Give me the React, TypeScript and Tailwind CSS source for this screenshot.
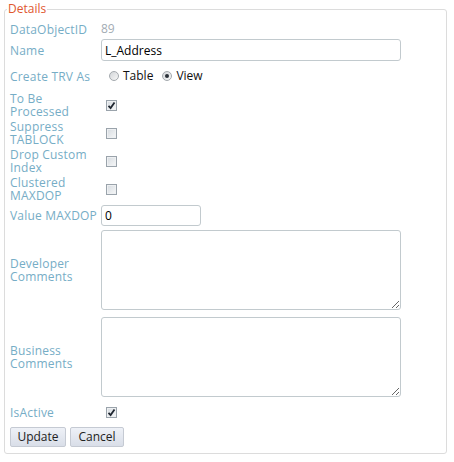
import React from "react";

const font = { fontFamily: '"Open Sans", "DejaVu Sans", sans-serif' };

const Check = ({ checked }: { checked?: boolean }) => (
    <span className="ml-[5px] flex h-[11px] w-[11px] items-center justify-center border border-[#9aa3ab] bg-gradient-to-br from-[#d6dbe0] to-[#f6f7f8] shadow-[inset_0_0_0_1px_#eef0f2]">
        {checked && (
            <svg width="9" height="9" viewBox="0 0 9 9">
                <path d="M1.5 4.8 L3.6 7 L7.5 1.5" fill="none" stroke="#1f2630" strokeWidth="1.8" />
            </svg>
        )}
    </span>
);

const Radio = ({ checked }: { checked?: boolean }) => (
    <span className="flex h-[10px] w-[10px] items-center justify-center rounded-full border border-[#a4a9ae] bg-gradient-to-br from-[#d3d6d9] to-[#f7f7f7]">
        {checked && <span className="h-[4px] w-[4px] rounded-full bg-[#2a3038]" />}
    </span>
);

const Row = ({ label, h, children }: any) => (
    <div className="flex items-center" style={{ height: h }}>
        <div className="w-[91px] shrink-0 leading-[13px] tracking-[0.2px] text-[#76adc6]">{label}</div>
        {children}
    </div>
);

export default function App() {
    return (
        <div className="w-[454px] h-[462px] bg-white text-[12px]" style={font}>
            <fieldset className="ml-[4px] w-[443px] rounded-[3px] border border-[#dcdcdc] px-[5px] pt-px pb-[6px]">
                <legend className="-ml-[3px] px-px leading-[18px] text-[#e0572f]">Details</legend>
                <Row label="DataObjectID" h={20}>
                    <span className="text-[#a3acb4]">89</span>
                </Row>
                <Row label="Name" h={22}>
                    <input
                        defaultValue="L_Address"
                        className="h-[22px] w-[300px] rounded-[3px] border border-[#c2cace] px-[3px] text-[12px] text-black outline-none"
                        style={font}
                    />
                </Row>
                <Row label="Create TRV As" h={30}>
                    <div className="flex items-center tracking-normal">
                        <span className="ml-[8px]"><Radio /></span>
                        <span className="ml-[4px] text-[#111]">Table</span>
                        <span className="ml-[9px]"><Radio checked /></span>
                        <span className="ml-[4px] text-[#111]">View</span>
                    </div>
                </Row>
                <Row label={<>To Be<br />Processed</>} h={28}>
                    <Check checked />
                </Row>
                <Row label={<>Suppress<br />TABLOCK</>} h={28}>
                    <Check />
                </Row>
                <Row label={<>Drop Custom<br />Index</>} h={28}>
                    <Check />
                </Row>
                <Row label={<>Clustered<br />MAXDOP</>} h={28}>
                    <Check />
                </Row>
                <Row label="Value MAXDOP" h={24}>
                    <input
                        defaultValue="0"
                        className="h-[21px] w-[100px] rounded-[3px] border border-[#c2cace] px-[3px] text-[12px] text-black outline-none"
                        style={font}
                    />
                </Row>
                <div className="flex items-center pt-[3px]">
                    <div className="w-[91px] shrink-0 leading-[13px] tracking-[0.2px] text-[#76adc6]">Developer<br />Comments</div>
                    <textarea className="h-[80px] w-[300px] resize-y rounded-[3px] border border-[#c2cace] outline-none" />
                </div>
                <div className="flex items-center pt-[7px]">
                    <div className="w-[91px] shrink-0 leading-[13px] tracking-[0.2px] text-[#76adc6]">Business<br />Comments</div>
                    <textarea className="h-[80px] w-[300px] resize-y rounded-[3px] border border-[#c2cace] outline-none" />
                </div>
                <Row label="IsActive" h={30}>
                    <Check checked />
                </Row>
                <div className="flex gap-[4px]">
                    <button className="h-[20px] w-[56px] rounded-[2px] border border-[#c5cad3] bg-gradient-to-b from-[#eef1f7] to-[#d9dee8] text-[12px] text-[#222]" style={font}>Update</button>
                    <button className="h-[20px] w-[54px] rounded-[2px] border border-[#c5cad3] bg-gradient-to-b from-[#eef1f7] to-[#d9dee8] text-[12px] text-[#222]" style={font}>Cancel</button>
                </div>
            </fieldset>
        </div>
    );
}
